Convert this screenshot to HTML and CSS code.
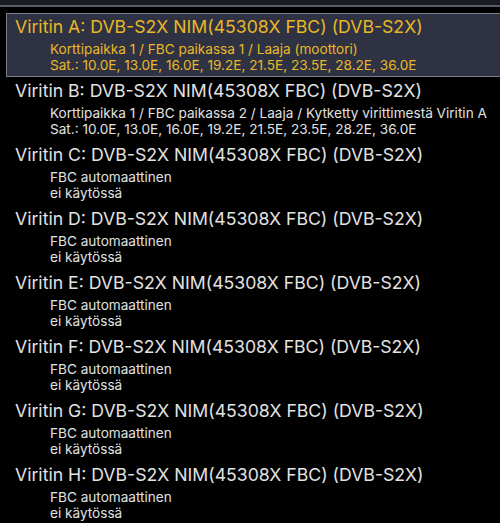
FILE: index.html
```html
<!DOCTYPE html>
<html>
<head>
    <title>Viritinasetukset</title>
    <link rel="stylesheet" href="styles.css">
</head>
<body>
    <div class="topbar"></div>
    <ul class="tuners">
        <li class="tuner selected">
            <div class="name">Viritin A: DVB-S2X NIM(45308X FBC) (DVB-S2X)</div>
            <div class="info">Korttipaikka 1 / FBC paikassa 1 / Laaja (moottori)</div>
            <div class="info">Sat.: 10.0E, 13.0E, 16.0E, 19.2E, 21.5E, 23.5E, 28.2E, 36.0E</div>
        </li>
        <li class="tuner">
            <div class="name">Viritin B: DVB-S2X NIM(45308X FBC) (DVB-S2X)</div>
            <div class="info">Korttipaikka 1 / FBC paikassa 2 / Laaja / Kytketty virittimestä Viritin A</div>
            <div class="info">Sat.: 10.0E, 13.0E, 16.0E, 19.2E, 21.5E, 23.5E, 28.2E, 36.0E</div>
        </li>
        <li class="tuner">
            <div class="name">Viritin C: DVB-S2X NIM(45308X FBC) (DVB-S2X)</div>
            <div class="info">FBC automaattinen</div>
            <div class="info">ei käytössä</div>
        </li>
        <li class="tuner">
            <div class="name">Viritin D: DVB-S2X NIM(45308X FBC) (DVB-S2X)</div>
            <div class="info">FBC automaattinen</div>
            <div class="info">ei käytössä</div>
        </li>
        <li class="tuner">
            <div class="name">Viritin E: DVB-S2X NIM(45308X FBC) (DVB-S2X)</div>
            <div class="info">FBC automaattinen</div>
            <div class="info">ei käytössä</div>
        </li>
        <li class="tuner">
            <div class="name">Viritin F: DVB-S2X NIM(45308X FBC) (DVB-S2X)</div>
            <div class="info">FBC automaattinen</div>
            <div class="info">ei käytössä</div>
        </li>
        <li class="tuner">
            <div class="name">Viritin G: DVB-S2X NIM(45308X FBC) (DVB-S2X)</div>
            <div class="info">FBC automaattinen</div>
            <div class="info">ei käytössä</div>
        </li>
        <li class="tuner">
            <div class="name">Viritin H: DVB-S2X NIM(45308X FBC) (DVB-S2X)</div>
            <div class="info">FBC automaattinen</div>
            <div class="info">ei käytössä</div>
        </li>
    </ul>
</body>
</html>
```

FILE: styles.css
```css
body {
    margin: 0;
    padding: 0;
    background-color: #000;
    font-family: Inter, "Liberation Sans", sans-serif;
    color: #e2e2e2;
    overflow: hidden;
}

.topbar {
    height: 5px;
    background-color: #181b24;
    border-bottom: 2px solid #5a5d66;
    margin-bottom: 6px;
}

.tuners {
    list-style-type: none;
    margin: 0;
    padding: 0 0 0 6px;
}

.tuner {
    height: 64px;
    box-sizing: border-box;
    padding: 1px 0 0 8px;
    border: 1px solid transparent;
    border-right: none;
}

.tuner.selected {
    background-color: #2f3242;
    border-color: #7a7d88;
    color: #e9b826;
}

.name {
    font-size: 17.65px;
    line-height: 24px;
    white-space: nowrap;
}

.info {
    font-size: 13.6px;
    line-height: 16px;
    padding-left: 35px;
    white-space: nowrap;
}

.name + .info {
    margin-top: 2px;
}
```
